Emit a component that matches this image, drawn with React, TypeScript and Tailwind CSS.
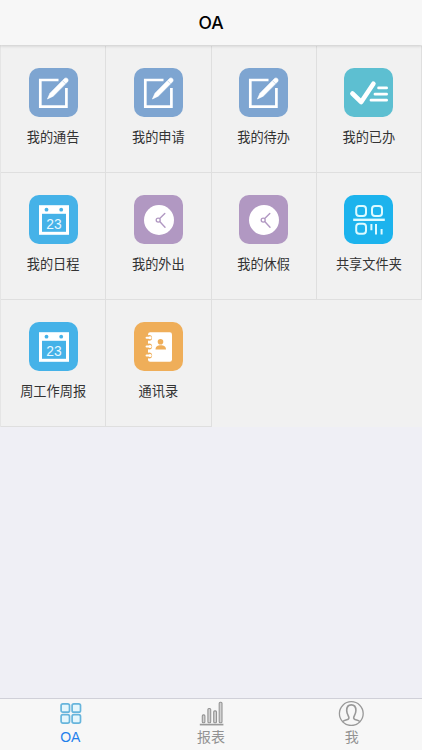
import React from 'react';

type IconProps = { className?: string };

function EditIcon({ className }: IconProps) {
  return (
    <svg className={className} viewBox="0 0 49 49" fill="none">
      <path d="M29.5 12H11.3V38.7H37.4V20" stroke="#fff" strokeWidth="2.7" />
      <path
        d="M18.4 31L21 25.2L35.6 10.4Q37 9.3 38.4 10.6T38.8 13.6L24.2 28.2Z"
        fill="#fff"
        stroke="#fff"
        strokeWidth="0.6"
        strokeLinejoin="round"
      />
      <path d="M33.4 12.6L36.6 15.8" stroke="#7ea5d1" strokeWidth="0.4" />
    </svg>
  );
}

function DoneIcon({ className }: IconProps) {
  return (
    <svg className={className} viewBox="0 0 49 49" fill="none" stroke="#fff" strokeLinecap="round">
      <path d="M8.4 25.5L17.2 34L29.4 15.7" strokeWidth="4.6" strokeLinejoin="round" />
      <path d="M34.6 19.9H42.6M31 26.2H42.6M27 32.2H42.6" strokeWidth="2.8" />
    </svg>
  );
}

function CalendarIcon({ className }: IconProps) {
  return (
    <svg className={className} viewBox="0 0 49 49">
      <rect x="10" y="10.2" width="30" height="29.6" fill="#fff" />
      <circle cx="17.5" cy="14.7" r="1.9" fill="#45b2e8" />
      <circle cx="32.2" cy="14.7" r="1.9" fill="#45b2e8" />
      <rect x="13" y="18.8" width="24" height="18" fill="#45b2e8" />
      <text
        x="25"
        y="33.8"
        textAnchor="middle"
        fontSize="13.8"
        fill="#e8f8ff"
        className="font-['Liberation_Sans',sans-serif]"
      >
        23
      </text>
    </svg>
  );
}

function ClockIcon({ className }: IconProps) {
  return (
    <svg className={className} viewBox="0 0 49 49" fill="none">
      <circle cx="25" cy="25" r="15" fill="#fff" />
      <g stroke="#b198c2" strokeLinecap="round">
        <path d="M25.7 23.6L30.8 18.6M25.7 26.6L31 32.2" strokeWidth="1.4" />
        <circle cx="24.2" cy="25.1" r="2" strokeWidth="1.3" />
      </g>
    </svg>
  );
}

function FolderIcon({ className }: IconProps) {
  return (
    <svg className={className} viewBox="0 0 49 49" fill="none" stroke="#dcfaff" strokeWidth="2">
      <rect x="12.2" y="11" width="9.8" height="10" rx="3" />
      <rect x="28" y="11" width="10" height="10" rx="3" />
      <rect x="12.2" y="28.8" width="9.8" height="10" rx="3" />
      <path d="M9.2 24.8H40.8" strokeWidth="2.4" />
      <path d="M27.4 29V35.2M32 29V39.6M37.6 34V39.6" strokeWidth="2" />
    </svg>
  );
}

function ContactsIcon({ className }: IconProps) {
  return (
    <svg className={className} viewBox="0 0 49 49" fill="none">
      <rect x="14" y="10.3" width="24" height="29.5" rx="2.2" fill="#fff" />
      <circle cx="26.5" cy="19.8" r="2.8" fill="#efae59" />
      <path d="M21.5 27.5C21.5 24.5 23.7 23.2 26.7 23.2S32 24.5 32 27.5Z" fill="#efae59" />
      {[15.8, 24.5, 33.5].map((y) => (
        <g key={y}>
          <circle cx="15.2" cy={y} r="2.9" fill="#efae59" />
          <path d={`M12.6 ${y}H16`} stroke="#fff" strokeWidth="2.1" strokeLinecap="round" />
          <circle cx="16.1" cy={y} r="1.5" fill="#fff" />
        </g>
      ))}
    </svg>
  );
}

function GridTabIcon() {
  return (
    <svg className="h-[27px] w-[27px]" viewBox="0 0 27 27" fill="#e5f6fc" stroke="#67b5dc" strokeWidth="1.7">
      <rect x="4.1" y="4.8" width="8.4" height="8.4" rx="1.8" />
      <rect x="15.1" y="4.8" width="8.4" height="8.4" rx="1.8" />
      <rect x="4.1" y="15.7" width="8.4" height="8.4" rx="1.8" />
      <rect x="15.1" y="15.7" width="8.4" height="8.4" rx="1.8" />
    </svg>
  );
}

function ChartTabIcon() {
  return (
    <svg className="h-[27px] w-[27px]" viewBox="0 0 27 27" fill="#d2d2d2" stroke="#959595" strokeWidth="1.1">
      <rect x="4.3" y="15.9" width="2.6" height="7.8" rx="1" />
      <rect x="9.9" y="9.5" width="2.8" height="14.2" rx="1" />
      <rect x="15.7" y="11.9" width="2.8" height="11.8" rx="1" />
      <rect x="21.2" y="3.3" width="2.8" height="20.4" rx="1" />
      <path d="M1.8 25.6H25.4" stroke="#999" strokeWidth="1.7" />
    </svg>
  );
}

function MeTabIcon() {
  return (
    <svg className="h-[27px] w-[27px]" viewBox="0 0 27 27" fill="none" stroke="#999" strokeWidth="1.3">
      <circle cx="13.3" cy="14.6" r="11.9" />
      <path
        d="M4.9 22.5C7 20.8 10.3 21.2 10.9 19.2C11.4 17.4 8.7 15.7 8.7 11.5C8.7 8 10.5 5.9 13.3 5.9S17.9 8 17.9 11.5C17.9 15.7 15.2 17.4 15.7 19.2C16.3 21.2 19.6 20.8 21.7 22.5"
        strokeWidth="1.6"
      />
    </svg>
  );
}

interface MenuItem {
  label: string;
  color: string;
  icon: React.ComponentType<IconProps>;
}

const menuItems: MenuItem[] = [
  { label: '我的通告', color: 'bg-[#7ea5d1]', icon: EditIcon },
  { label: '我的申请', color: 'bg-[#7ea5d1]', icon: EditIcon },
  { label: '我的待办', color: 'bg-[#7ea5d1]', icon: EditIcon },
  { label: '我的已办', color: 'bg-[#5dbfd1]', icon: DoneIcon },
  { label: '我的日程', color: 'bg-[#45b2e8]', icon: CalendarIcon },
  { label: '我的外出', color: 'bg-[#b198c2]', icon: ClockIcon },
  { label: '我的休假', color: 'bg-[#b198c2]', icon: ClockIcon },
  { label: '共享文件夹', color: 'bg-[#1cb3ed]', icon: FolderIcon },
  { label: '周工作周报', color: 'bg-[#45b2e8]', icon: CalendarIcon },
  { label: '通讯录', color: 'bg-[#efae59]', icon: ContactsIcon },
];

const tabs = [
  { label: 'OA', icon: GridTabIcon, active: true },
  { label: '报表', icon: ChartTabIcon, active: false },
  { label: '我', icon: MeTabIcon, active: false },
];

export default function App() {
  return (
    <div className="flex h-[750px] w-[422px] flex-col overflow-hidden bg-[#efeff5] font-['Liberation_Sans','Noto_Sans_CJK_SC',sans-serif]">
      <header className="z-10 flex h-[45px] shrink-0 items-center justify-center bg-[#f7f7f7] pt-px shadow-[0_1px_3px_rgba(0,0,0,0.16)]">
        <h1 className="font-['Inter',sans-serif] text-[17.5px] font-medium text-black">OA</h1>
      </header>

      <main className="flex-1">
        <div className="grid grid-cols-4 border-l border-[#e5e5e5] bg-[#f1f1f1] pt-px">
          {menuItems.map(({ label, color, icon: Icon }) => (
            <div key={label} className="flex h-[127px] flex-col items-center border-r border-b border-[#dfdfdf] pt-[22px]">
              <div className={`h-[49px] w-[49px] rounded-[10px] ${color}`}>
                <Icon className="h-full w-full" />
              </div>
              <span className="mt-[11px] text-[13.2px] leading-5 whitespace-nowrap text-[#333]">{label}</span>
            </div>
          ))}
        </div>
      </main>

      <nav className="flex h-[52px] shrink-0 border-t border-[#d0d0d8] bg-[#f7f7f7]">
        {tabs.map(({ label, icon: Icon, active }) => (
          <div
            key={label}
            className={`flex flex-1 flex-col items-center ${active ? 'text-[#1f80ec]' : 'text-[#929292]'}`}
          >
            <Icon />
            <span className="mt-px text-[14px] leading-5">{label}</span>
          </div>
        ))}
      </nav>
    </div>
  );
}
